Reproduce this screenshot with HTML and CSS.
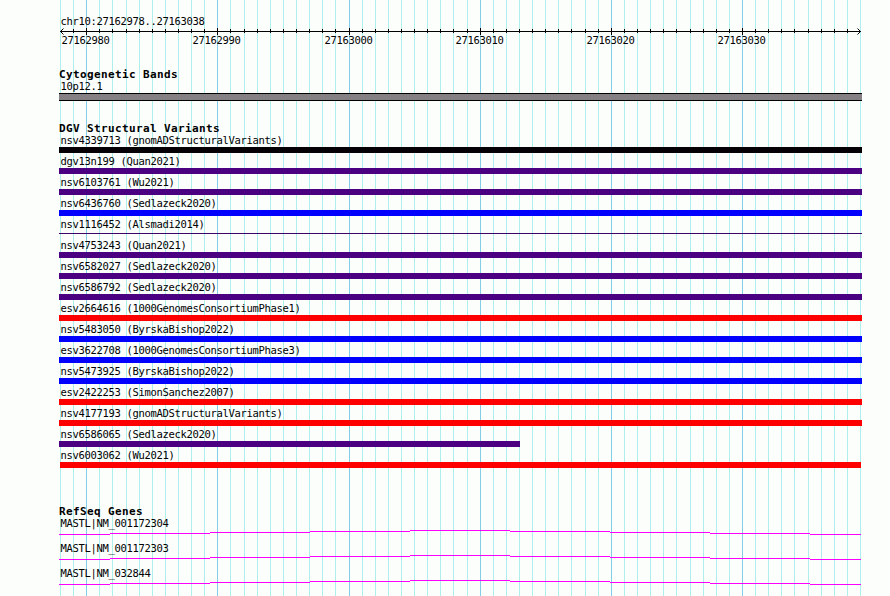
FILE: index.html
```
<!DOCTYPE html>
<html lang="en">
<head>
    <meta charset="UTF-8">
    <title>chr10:27162978..27163038</title>
    <link rel="stylesheet" href="styles.css">
</head>
<body>
    <svg id="grid" class="grid" width="890" height="596"></svg>

    <div class="browser">
        <div class="region label">chr10:27162978..27163038</div>
        <svg id="axis" class="axis" width="803" height="40"></svg>

        <section class="track cytoband">
            <h2>Cytogenetic Bands</h2>
            <div class="label">10p12.1</div>
            <div class="band"></div>
        </section>

        <section class="track variants">
            <h2>DGV Structural Variants</h2>
            <div id="variants"></div>
        </section>

        <section class="track genes">
            <h2>RefSeq Genes</h2>
            <div id="genes"></div>
        </section>
    </div>
    <script src="script.js"></script>
</body>
</html>
```
FILE: styles.css
```
body {
    margin: 0;
    width: 890px;
    height: 596px;
    overflow: hidden;
    position: relative;
    background-color: #fcfefc;
    color: #000;
    font-family: "DejaVu Sans Mono", monospace;
}

/* vertical guide lines behind all tracks */
.grid {
    position: absolute;
    top: 0;
    left: 0;
}

.grid .minor {
    fill: #aeeeec;
}

.grid .major {
    fill: #84cde9;
}

.browser {
    position: relative;
    width: 803px;
    padding: 15px 0 0 59px;
}

.label {
    height: 13px;
    padding-left: 1.4px;
    font-size: 10.5px;
    line-height: 13px;
    letter-spacing: -0.32px;
    white-space: pre;
}

.axis {
    display: block;
    overflow: visible;
}

.axis text {
    font-size: 10.5px;
    letter-spacing: -0.32px;
}

.axis .arrow {
    fill: none;
    stroke: #000;
}

h2 {
    height: 12px;
    margin: 0;
    font-size: 11px;
    line-height: 13px;
    letter-spacing: 0.38px;
    white-space: pre;
}

.cytoband {
    height: 54px;
}

.band {
    height: 6px;
    border-top: 1px solid #000;
    border-bottom: 1px solid #000;
    background-color: #848084;
}

.variants {
    height: 383px;
}

.variant {
    height: 21px;
}

.bar {
    height: 6px;
}

.black {
    background-color: #040004;
}

.purple {
    background-color: #4b0082;
}

.blue {
    background-color: #0000ff;
}

.red {
    background-color: #ff0000;
}

.thin {
    height: 1px;
    margin-top: 2px;
    background-color: #3c0468;
}

.short {
    width: 461px;
}

.inset {
    margin: 0 1px;
}

.gene {
    height: 25px;
}

.gene svg {
    display: block;
    fill: #ff00ff;
}
```
FILE: script.js
```
const svgNS = 'http://www.w3.org/2000/svg';
const grid = document.getElementById('grid');
const axis = document.getElementById('axis');
const variants = document.getElementById('variants');
const genes = document.getElementById('genes');

const bases = 61;
const panelWidth = 800;

function addRect(parent, x, y, width, height, cls) {
    const rect = document.createElementNS(svgNS, 'rect');
    rect.setAttribute('x', x);
    rect.setAttribute('y', y);
    rect.setAttribute('width', width);
    rect.setAttribute('height', height);
    if (cls) rect.setAttribute('class', cls);
    parent.appendChild(rect);
}

// grid lines and ruler
addRect(axis, 1, 3, 801, 1);
for (let i = 0; i <= bases; i++) {
    const x = 60 + Math.round(i * panelWidth / bases);
    const major = i % 10 === 2;
    addRect(grid, x, 0, 1, 596, major ? 'major' : 'minor');
    if (i > 0 && i < bases) {
        addRect(axis, x - 59, major ? 0 : 1, 1, major ? 7 : 4);
    }
    if (major) {
        const text = document.createElementNS(svgNS, 'text');
        text.setAttribute('x', x - 83.6);
        text.setAttribute('y', 16);
        text.textContent = 27162978 + i;
        axis.appendChild(text);
    }
}

const arrows = document.createElementNS(svgNS, 'path');
arrows.setAttribute('class', 'arrow');
arrows.setAttribute('d', 'M4.5 0.5L1.5 3.5L4.5 6.5M798.5 0.5L801.5 3.5L798.5 6.5');
axis.appendChild(arrows);

const variantRows = [
    ['nsv4339713 (gnomADStructuralVariants)', 'black'],
    ['dgv13n199 (Quan2021)', 'purple'],
    ['nsv6103761 (Wu2021)', 'purple'],
    ['nsv6436760 (Sedlazeck2020)', 'blue'],
    ['nsv1116452 (Alsmadi2014)', 'thin'],
    ['nsv4753243 (Quan2021)', 'purple'],
    ['nsv6582027 (Sedlazeck2020)', 'purple'],
    ['nsv6586792 (Sedlazeck2020)', 'purple'],
    ['esv2664616 (1000GenomesConsortiumPhase1)', 'red'],
    ['nsv5483050 (ByrskaBishop2022)', 'blue'],
    ['esv3622708 (1000GenomesConsortiumPhase3)', 'blue'],
    ['nsv5473925 (ByrskaBishop2022)', 'blue'],
    ['esv2422253 (SimonSanchez2007)', 'red'],
    ['nsv4177193 (gnomADStructuralVariants)', 'red'],
    ['nsv6586065 (Sedlazeck2020)', 'purple short'],
    ['nsv6003062 (Wu2021)', 'red inset']
];

variantRows.forEach(([name, cls]) => {
    const row = document.createElement('div');
    row.className = 'variant';
    row.innerHTML = `<div class="label">${name}</div><div class="bar ${cls}"></div>`;
    variants.appendChild(row);
});

// introns rise to the middle of the panel and fall again
const intron = [[0, 51, 4], [51, 100, 3], [151, 100, 2], [251, 100, 1], [351, 100, 0],
    [451, 100, 1], [551, 100, 2], [651, 100, 3], [751, 51, 4]];

['MASTL|NM_001172304', 'MASTL|NM_001172303', 'MASTL|NM_032844'].forEach(name => {
    const row = document.createElement('div');
    row.className = 'gene';
    row.innerHTML = `<div class="label">${name}</div><svg width="803" height="5"></svg>`;
    genes.appendChild(row);
    intron.forEach(([x, width, y]) => addRect(row.querySelector('svg'), x, y, width, 1));
});
```
